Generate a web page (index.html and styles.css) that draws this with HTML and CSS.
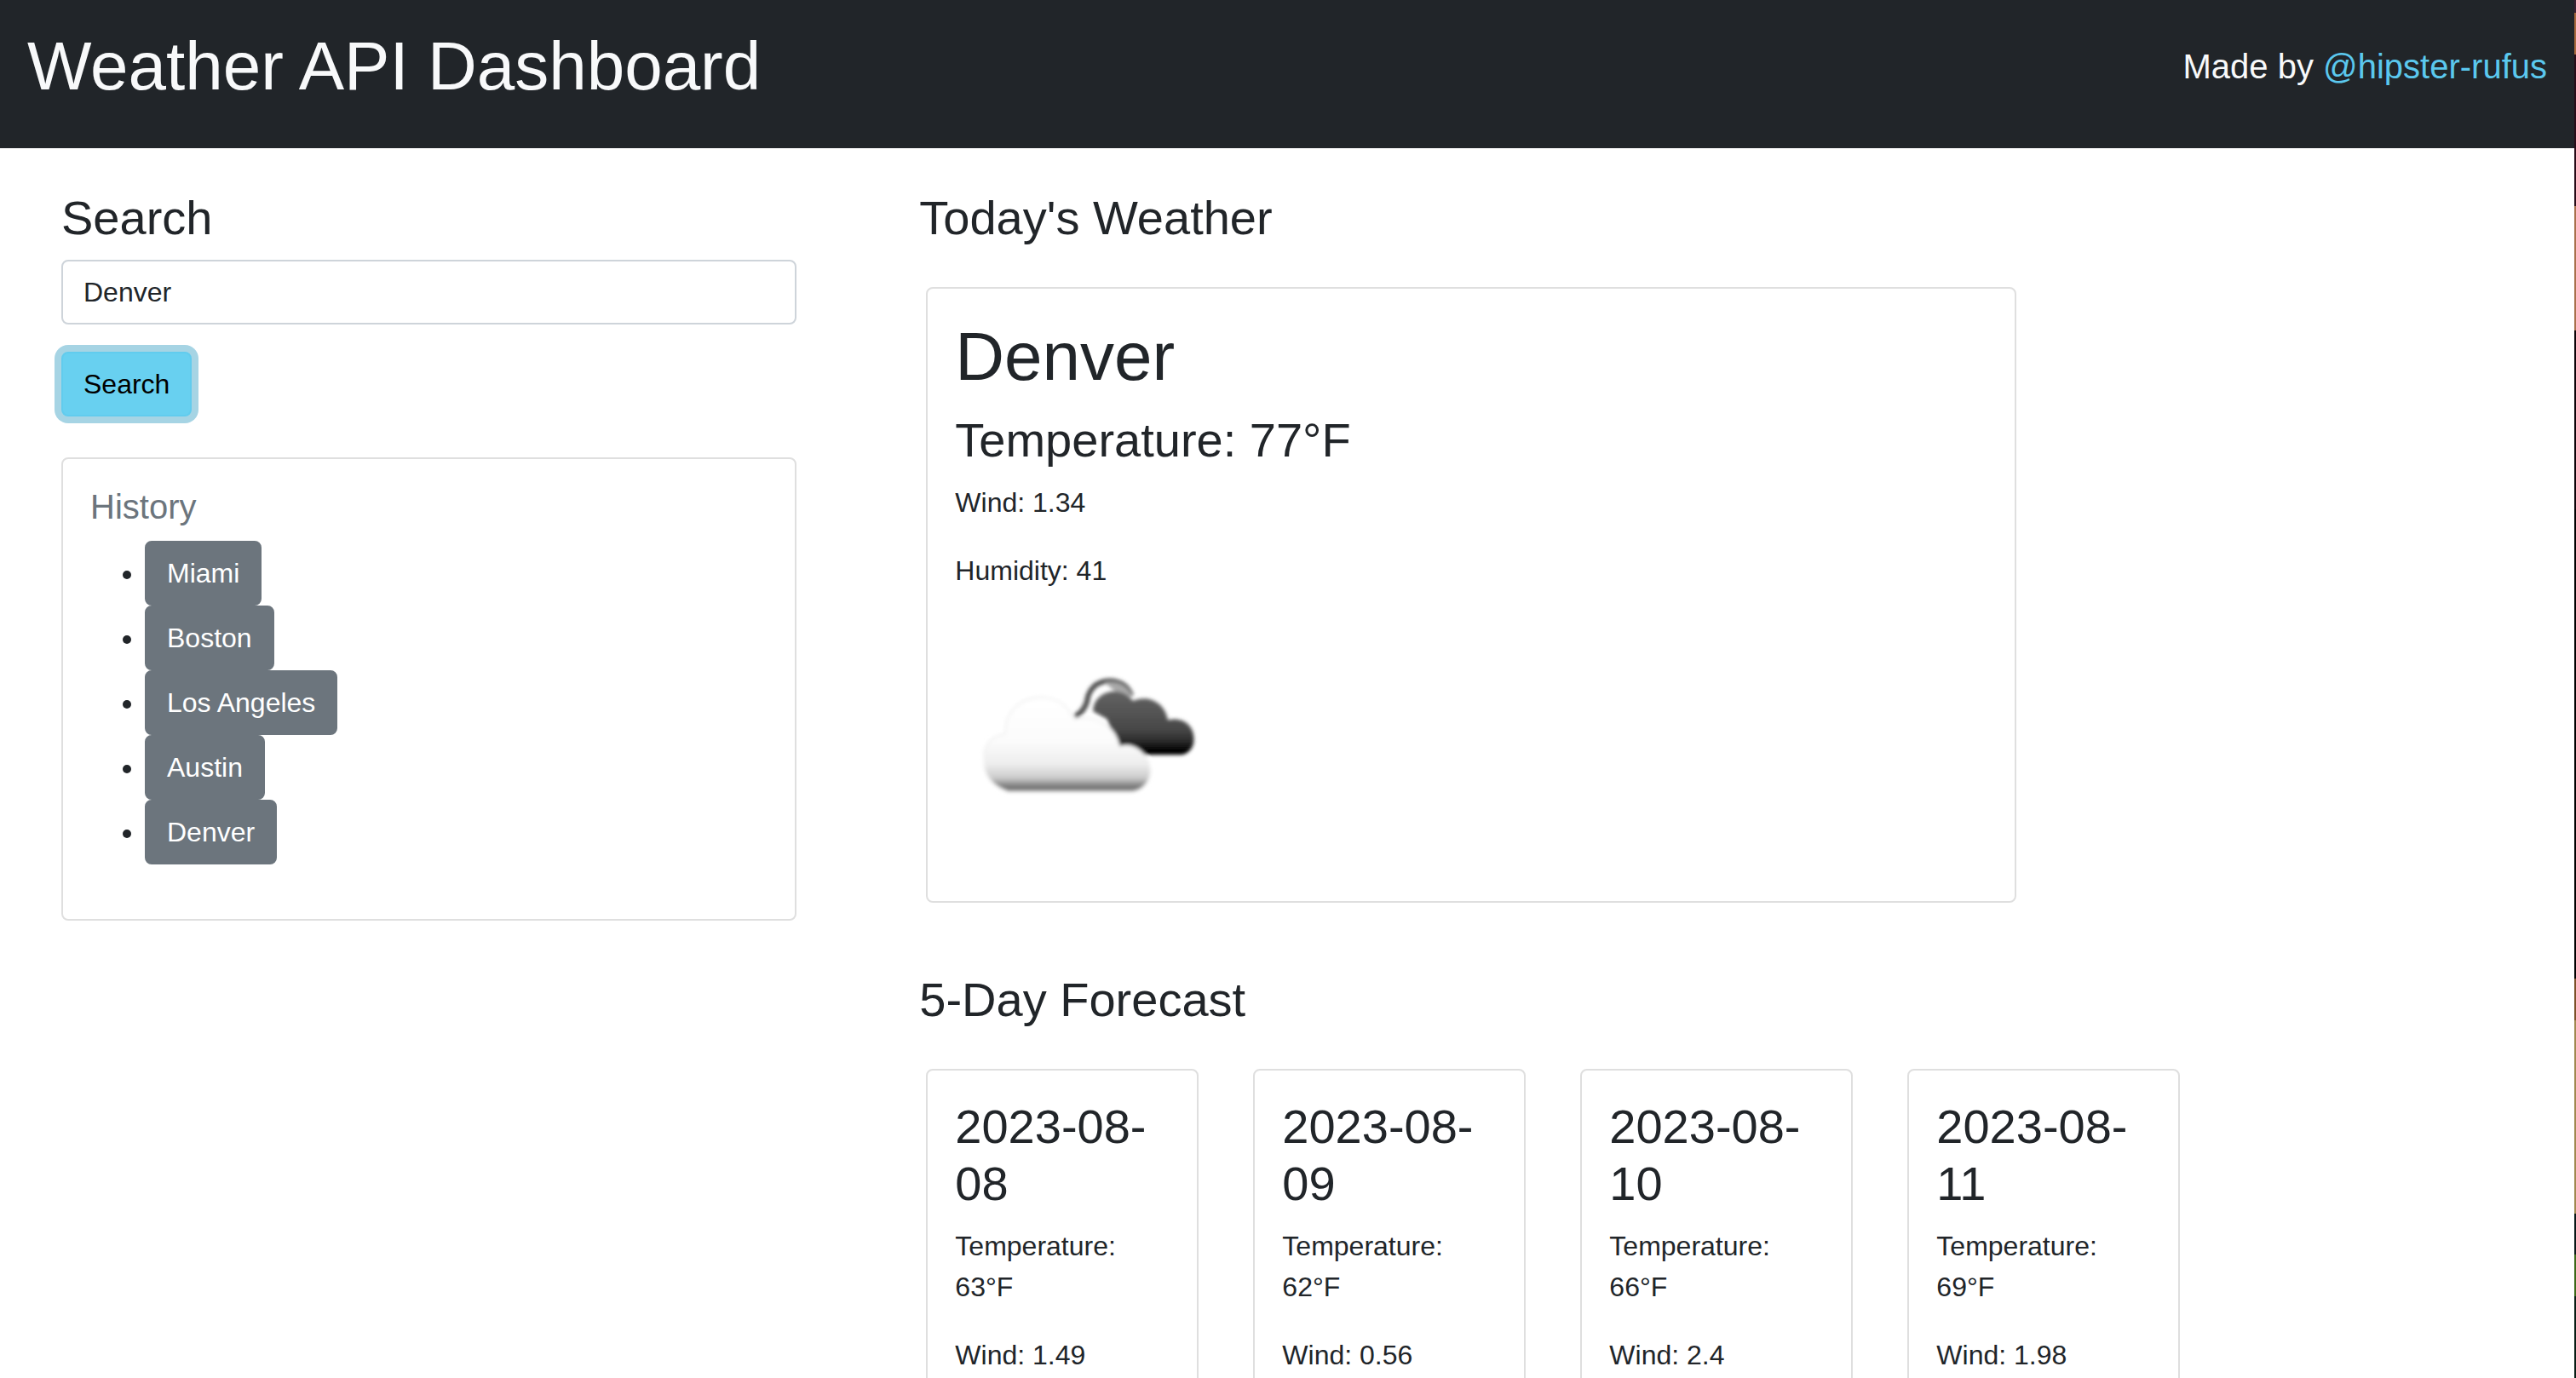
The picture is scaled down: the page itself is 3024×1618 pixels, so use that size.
FILE: index.html
```html
<!DOCTYPE html>
<html lang="en">
<head>
  <meta charset="utf-8">
  <title>Weather API Dashboard</title>
  <link rel="stylesheet" href="styles.css">
</head>
<body>
  <header class="topbar">
    <h1 class="topbar-title">Weather API Dashboard</h1>
    <p class="credit">Made by <a class="credit-link" href="#">@hipster-rufus</a></p>
  </header>

  <main class="layout">
    <aside class="sidebar">
      <form class="search">
        <label class="heading" for="city">Search</label>
        <input class="search-input" id="city" type="text" value="Denver">
        <button class="btn btn-info" type="button">Search</button>
      </form>
      <section class="card">
        <h2 class="history-title">History</h2>
        <ul class="history-list">
          <li><button class="btn btn-secondary" type="button">Miami</button></li>
          <li><button class="btn btn-secondary" type="button">Boston</button></li>
          <li><button class="btn btn-secondary" type="button">Los Angeles</button></li>
          <li><button class="btn btn-secondary" type="button">Austin</button></li>
          <li><button class="btn btn-secondary" type="button">Denver</button></li>
        </ul>
      </section>
    </aside>

    <div class="weather">
      <section class="today">
        <h2 class="heading">Today's Weather</h2>
        <article class="card today-card">
          <h3 class="city-name">Denver</h3>
          <p class="heading">Temperature: 77°F</p>
          <p class="detail">Wind: 1.34</p>
          <p class="detail">Humidity: 41</p>
          <svg class="weather-icon" viewBox="0 0 300 300" aria-hidden="true">
            <defs>
              <linearGradient id="dark" x1="0" y1="0" x2="0" y2="1">
                <stop offset="0" stop-color="#636363"/>
                <stop offset=".6" stop-color="#484848"/>
                <stop offset=".78" stop-color="#2c2c2c"/>
                <stop offset=".94" stop-color="#000"/>
              </linearGradient>
              <linearGradient id="light" x1="0" y1="0" x2="0" y2="1">
                <stop offset="0" stop-color="#fff"/>
                <stop offset=".45" stop-color="#fcfcfc"/>
                <stop offset=".7" stop-color="#eee"/>
                <stop offset=".85" stop-color="#ccc"/>
                <stop offset=".94" stop-color="#7c7c7c"/>
                <stop offset="1" stop-color="#747474"/>
              </linearGradient>
              <filter id="soft" x="-10%" y="-10%" width="120%" height="120%">
                <feGaussianBlur stdDeviation="2"/>
              </filter>
            </defs>
            <g filter="url(#soft)" transform="translate(-3 -2) scale(1.02)">
              <path d="M141 115 Q154 108 156 92 Q162 74 182 74 Q200 75 206 91" fill="none" stroke="#505050" stroke-width="6"/>
              <path d="M175 76 Q198 72 208 93 L192 90 Z" fill="#a8a8a8"/>
              <path d="M162 109 C162 96 172 87 185 86 C196 86 202 90 208 97 C222 90 244 96 248 119 C264 115 278 124 278 141 C278 151 272 158 264 159 L220 159 L190 150 L178 118 Z" fill="url(#dark)"/>
              <path d="M64 202 C48 196 35 184 37 166 C34 149 44 138 61 135 C60 111 76 94 100 93 C118 92 132 101 140 118 C166 112 188 127 192 150 C208 144 226 158 228 177 C228 193 216 202 204 202 Z" fill="url(#light)" stroke="#f1f1f1" stroke-width="2"/>
            </g>
          </svg>
        </article>
      </section>

      <section class="forecast">
        <h2 class="heading">5-Day Forecast</h2>
        <div class="forecast-grid">
          <article class="card">
            <h3 class="heading">2023-08-08</h3>
            <p class="detail">Temperature: 63°F</p>
            <p class="detail">Wind: 1.49</p>
          </article>
          <article class="card">
            <h3 class="heading">2023-08-09</h3>
            <p class="detail">Temperature: 62°F</p>
            <p class="detail">Wind: 0.56</p>
          </article>
          <article class="card">
            <h3 class="heading">2023-08-10</h3>
            <p class="detail">Temperature: 66°F</p>
            <p class="detail">Wind: 2.4</p>
          </article>
          <article class="card">
            <h3 class="heading">2023-08-11</h3>
            <p class="detail">Temperature: 69°F</p>
            <p class="detail">Wind: 1.98</p>
          </article>
        </div>
      </section>
    </div>
  </main>
</body>
</html>
```
FILE: styles.css
```css
*,
*::before,
*::after {
  box-sizing: border-box;
}

html {
  background: #fff;
}

/* A thin strip of artwork runs down the right edge. */
body {
  margin: 0;
  height: 100vh;
  overflow: hidden;
  border-right: 2px solid;
  border-image: linear-gradient(
    #3a2030 1%,
    #a8683c 1% 4%,
    #280c18 4% 15%,
    #a8704c 15% 24%,
    #0c0408 24% 37%,
    #000 37% 71%,
    #7c5028 71% 74%,
    #a08850 74% 88%,
    #081818 88% 91%,
    #3c6818 91% 94%,
    #081c14 94%
  ) 1;
  color: #212529;
  font-family: "Liberation Sans", Arial, sans-serif;
  font-size: 32px;
  line-height: 48px;
}

h1,
h2,
h3,
p {
  margin: 0;
  font-weight: 400;
}

.topbar {
  display: flex;
  justify-content: space-between;
  align-items: center;
  padding: 30px 32px 48px;
  background: #212529;
  color: #f8f9fa;
}

.topbar-title,
.city-name {
  font-size: 80px;
  line-height: 96px;
}

.credit,
.history-title {
  font-size: 40px;
  line-height: 48px;
}

.credit-link {
  color: #5bc8ee;
  text-decoration: none;
}

.layout {
  display: grid;
  grid-template-columns: 1fr 2fr;
  padding-top: 48px;
}

.sidebar,
.weather {
  padding: 0 72px;
}

.heading {
  display: block;
  margin-bottom: 16px;
  font-size: 56px;
  line-height: 67px;
}

.search {
  margin-bottom: 48px;
}

.search-input {
  display: block;
  width: 100%;
  margin-bottom: 32px;
  padding: 12px 24px;
  border: 2px solid #ced4da;
  border-radius: 8px;
  background: #fff;
  color: #212529;
  font: inherit;
}

.btn {
  display: block;
  padding: 12px 24px;
  border: 2px solid;
  border-radius: 8px;
  font: inherit;
}

.btn-info {
  border-color: #61ccee;
  background: #68d0f0;
  color: #000;
  box-shadow: 0 0 0 8px #a6d4e4;
}

.btn-secondary {
  border-color: #6c757d;
  background: #6c757d;
  color: #fff;
}

.card {
  padding: 32px;
  border: 2px solid #dfdfdf;
  border-radius: 8px;
}

.history-title {
  margin-bottom: 16px;
  color: #6c757d;
}

.history-list {
  margin: 0 0 32px;
  padding-left: 64px;
}

.today {
  margin-bottom: 80px;
}

.today-card {
  max-width: 1280px;
  margin: 48px 0 0 8px;
}

.city-name {
  margin-bottom: 16px;
}

.detail {
  margin-bottom: 32px;
}

.weather-icon {
  display: block;
  width: 300px;
  height: 300px;
}

.forecast-grid {
  display: grid;
  grid-template-columns: repeat(4, 320px);
  gap: 64px;
  margin: 48px 0 0 8px;
}
```
